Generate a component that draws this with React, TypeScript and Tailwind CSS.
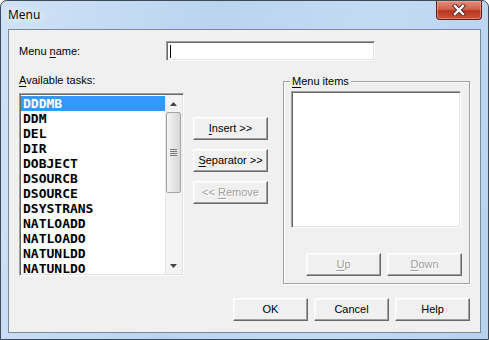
import type { ReactNode } from "react";

const tasks = [
  "DDDMB",
  "DDM",
  "DEL",
  "DIR",
  "DOBJECT",
  "DSOURCB",
  "DSOURCE",
  "DSYSTRANS",
  "NATLOADD",
  "NATLOADO",
  "NATUNLDD",
  "NATUNLDO",
];

function Key({ children }: { children: ReactNode }) {
  return <span className="underline underline-offset-[2px]">{children}</span>;
}

function Btn({
  children,
  disabled = false,
}: {
  children: ReactNode;
  disabled?: boolean;
}) {
  return (
    <div
      className={`flex h-[23px] w-[75px] items-center justify-center border border-t-white border-l-white border-r-[#696969] border-b-[#696969] bg-[#f0f0f0] shadow-[inset_-1px_-1px_0_#a0a0a0,inset_1px_1px_0_#f8f8f8] ${
        disabled ? "text-[#a0a0a0] [text-shadow:1px_1px_0_#fff]" : "text-black"
      }`}
    >
      {children}
    </div>
  );
}

function ScrollBar() {
  return (
    <div className="flex h-full w-[17px] flex-col bg-[#f3f3f3] shadow-[inset_1px_0_0_#e6e6e6]">
      <div className="flex h-[17px] items-center justify-center">
        <svg width="7" height="4" viewBox="0 0 7 4">
          <path d="M3.5 0 L7 4 L0 4 Z" fill="#444" />
        </svg>
      </div>
      <div className="mx-[1px] flex h-[81px] items-center justify-center rounded-[2px] border border-[#a5a5a5] bg-[linear-gradient(to_right,#f4f4f4,#e6e6e6_50%,#d6d6d6)]">
        <div className="flex flex-col gap-[1px]">
          <div className="h-[1px] w-[7px] bg-[#7a7a7a]" />
          <div className="h-[1px] w-[7px] bg-[#7a7a7a]" />
          <div className="h-[1px] w-[7px] bg-[#7a7a7a]" />
          <div className="h-[1px] w-[7px] bg-[#7a7a7a]" />
        </div>
      </div>
      <div className="flex-1" />
      <div className="flex h-[17px] items-center justify-center">
        <svg width="7" height="4" viewBox="0 0 7 4">
          <path d="M0 0 L7 0 L3.5 4 Z" fill="#444" />
        </svg>
      </div>
    </div>
  );
}

const sunken =
  "border border-t-[#a0a0a0] border-l-[#a0a0a0] border-r-white border-b-white shadow-[inset_1px_1px_0_#696969,inset_-1px_-1px_0_#e3e3e3]";

export default function App() {
  return (
    <div className="h-[340px] w-[489px] overflow-hidden bg-white">
      <div className="flex h-[340px] w-[489px] flex-col rounded-t-[7px] border border-[#3f4a57] bg-[linear-gradient(100deg,#cfe2f6,#bad4f0_40%,#c3daf3_70%,#b8d2ef)]">
        {/* title bar */}
        <div className="flex h-[28px] items-start justify-between">
          <span className="ml-[7px] mt-[6px] font-['Open_Sans','Noto_Sans',sans-serif] text-[12px] leading-[16px] text-black [text-shadow:0_0_6px_#fff,0_0_10px_#fff]">
            Menu
          </span>
          <div className="mr-[6px] flex h-[19px] w-[46px] items-center justify-center rounded-b-[4px] border border-t-0 border-[#5e2219] bg-[linear-gradient(to_bottom,#e58c78,#d2634c_45%,#b8351f_55%,#c9563a)] shadow-[inset_0_0_0_1px_rgba(255,190,175,0.45)]">
            <svg width="14" height="12" viewBox="0 0 14 12">
              <path
                d="M3 2 L11 10 M11 2 L3 10"
                stroke="#4a2a28"
                strokeWidth="4.2"
                strokeLinecap="square"
              />
              <path
                d="M3 2 L11 10 M11 2 L3 10"
                stroke="#fff"
                strokeWidth="2.4"
                strokeLinecap="square"
              />
            </svg>
          </div>
        </div>

        {/* client area */}
        <div className="mx-[7px] flex h-[304px] flex-col border border-[#7b8a9b] bg-[#f0f0f0] pl-[10px] pr-[10px] pt-[11px] font-['Liberation_Sans',Arial,sans-serif] text-[11px] leading-[13px] text-black">
          <div className="flex h-[20px] items-center">
            <span className="w-[147px]">
              Menu <Key>n</Key>ame:
            </span>
            <div className={`flex h-[20px] w-[209px] items-center bg-white pl-[3px] ${sunken}`}>
              <div className="h-[13px] w-[1px] bg-black" />
            </div>
          </div>

          <div className="mt-[13px] flex items-start">
            <div className="flex flex-col">
              <span className="h-[13px]">
                <Key>A</Key>vailable tasks:
              </span>
              <div className={`mt-[6px] flex h-[183px] w-[165px] bg-white p-[1px] ${sunken}`}>
                <div className="flex-1 pt-[1px] font-['DejaVu_Sans_Mono',monospace] text-[13px] font-bold leading-[15px]">
                  {tasks.map((t, i) => (
                    <div
                      key={t}
                      className={`h-[15px] pl-[2px] ${
                        i === 0 ? "bg-[#3399ff] text-white" : "text-black"
                      }`}
                    >
                      {t}
                    </div>
                  ))}
                </div>
                <ScrollBar />
              </div>
            </div>

            <div className="ml-[9px] mt-[43px] flex flex-col gap-[9px]">
              <Btn>
                <span>
                  <Key>I</Key>nsert &gt;&gt;
                </span>
              </Btn>
              <Btn>
                <span>
                  <Key>S</Key>eparator &gt;&gt;
                </span>
              </Btn>
              <Btn disabled>
                <span>
                  &lt;&lt; <Key>R</Key>emove
                </span>
              </Btn>
            </div>

            <div className="relative ml-[15px] mt-[7px] flex h-[203px] w-[187px] flex-col border border-[#a0a0a0] pl-[7px] pr-[7px] pt-[9px] shadow-[inset_1px_1px_0_#fff,1px_1px_0_#fff]">
              <span className="absolute -top-[7px] left-[6px] bg-[#f0f0f0] px-[2px]">
                <Key>M</Key>enu items
              </span>
              <div className={`h-[137px] w-[170px] bg-white ${sunken}`} />
              <div className="mt-[25px] flex justify-end gap-[6px]">
                <Btn disabled>
                  <span>
                    <Key>U</Key>p
                  </span>
                </Btn>
                <Btn disabled>
                  <span>
                    <Key>D</Key>own
                  </span>
                </Btn>
              </div>
            </div>
          </div>

          <div className="mt-[14px] flex justify-end gap-[6px]">
            <Btn>OK</Btn>
            <Btn>Cancel</Btn>
            <Btn>Help</Btn>
          </div>
        </div>
      </div>
    </div>
  );
}
